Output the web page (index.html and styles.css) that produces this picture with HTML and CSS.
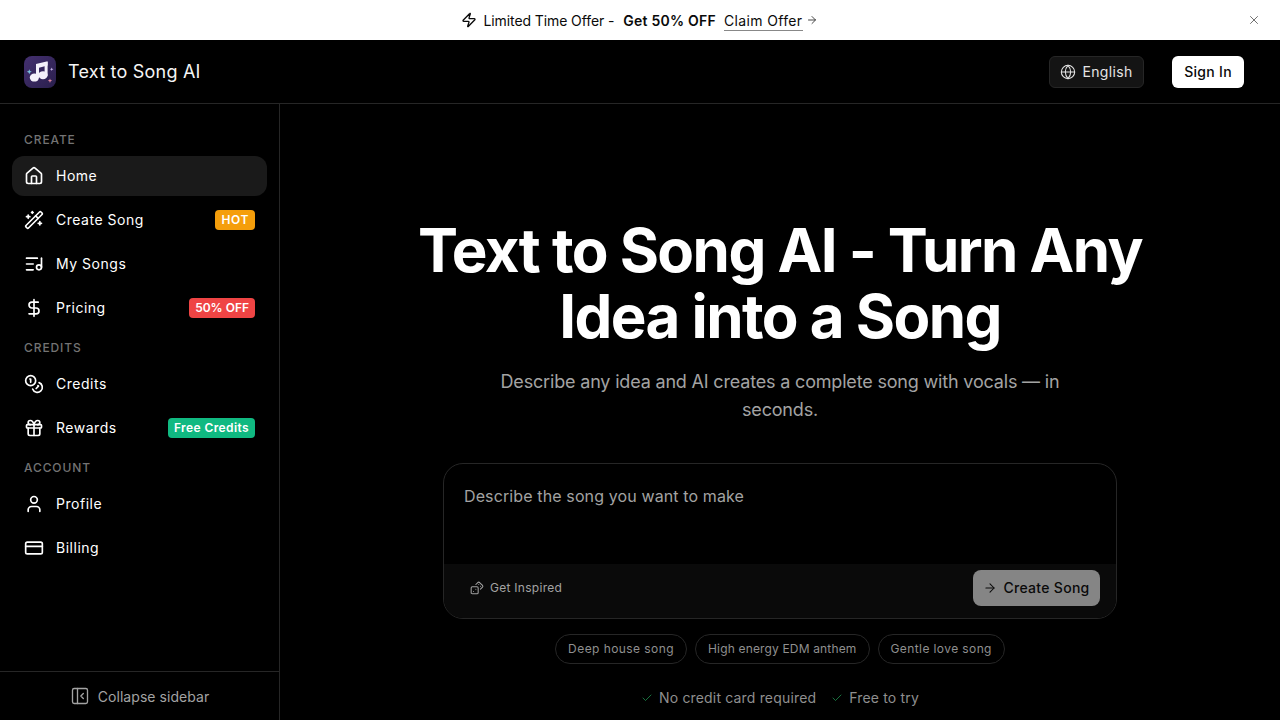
FILE: index.html
```html
<!DOCTYPE html>
<html lang="en">
<head>
  <meta charset="UTF-8">
  <title>Text to Song AI</title>
  <link rel="stylesheet" href="styles.css">
</head>
<body>
  <div class="promo">
    <svg class="ic promo-zap" viewBox="0 0 24 24"><path d="M4 14a1 1 0 0 1-.78-1.63l9.9-10.2a.5.5 0 0 1 .86.46l-1.92 6.02A1 1 0 0 0 13 10h7a1 1 0 0 1 .78 1.63l-9.9 10.2a.5.5 0 0 1-.86-.46l1.92-6.02A1 1 0 0 0 11 14z"/></svg>
    <span class="promo-text">Limited Time Offer -</span>
    <strong class="promo-deal">Get 50% OFF</strong>
    <a class="promo-link">Claim Offer</a>
    <svg class="ic promo-arrow" viewBox="0 0 24 24"><path d="M5 12h14"/><path d="m12 5 7 7-7 7"/></svg>
    <svg class="ic promo-close" viewBox="0 0 24 24"><path d="M18 6 6 18"/><path d="m6 6 12 12"/></svg>
  </div>

  <header class="topbar">
    <div class="brand">
      <svg class="logo" viewBox="0 0 32 32">
        <defs>
          <linearGradient id="logoBg" x1="0" y1="0" x2="1" y2="1">
            <stop offset="0" stop-color="#44306f"/>
            <stop offset="1" stop-color="#2a1f4d"/>
          </linearGradient>
        </defs>
        <rect width="32" height="32" rx="8" fill="url(#logoBg)"/>
        <path d="M12 8 23.6 5.2V9.6L15 11.8V21.5H12z" fill="#f4f0fa"/>
        <rect x="20.6" y="6" width="3" height="13.5" fill="#f4f0fa"/>
        <ellipse cx="10.4" cy="21.6" rx="4.6" ry="4" fill="#f4f0fa"/>
        <ellipse cx="19" cy="19.2" rx="4.6" ry="4" fill="#f4f0fa"/>
        <path d="M5.3 13.2l.7 1.8 1.8.7-1.8.7-.7 1.8-.7-1.8-1.8-.7 1.8-.7z" fill="#7cc4e0"/>
        <path d="M27.7 11.5l.5 1.3 1.3.5-1.3.5-.5 1.3-.5-1.3-1.3-.5 1.3-.5z" fill="#c9b8ee"/>
        <path d="M26 22.5l.6 1.6 1.6.6-1.6.6-.6 1.6-.6-1.6-1.6-.6 1.6-.6z" fill="#e58aa0"/>
      </svg>
      <span class="brand-name">Text to Song AI</span>
    </div>
    <div class="topbar-actions">
      <button class="lang-btn">
        <svg class="ic" viewBox="0 0 24 24"><circle cx="12" cy="12" r="10"/><path d="M12 2a14.5 14.5 0 0 0 0 20 14.5 14.5 0 0 0 0-20"/><path d="M2 12h20"/></svg>
        <span>English</span>
      </button>
      <button class="signin-btn"><span>Sign In</span></button>
    </div>
  </header>

  <div class="layout">
    <aside class="sidebar">
      <nav class="side-nav">
        <div class="nav-label">CREATE</div>
        <a class="nav-item active">
          <svg class="ic" viewBox="0 0 24 24"><path d="M15 21v-8a1 1 0 0 0-1-1h-4a1 1 0 0 0-1 1v8"/><path d="M3 10a2 2 0 0 1 .709-1.528l7-5.999a2 2 0 0 1 2.582 0l7 5.999A2 2 0 0 1 21 10v9a2 2 0 0 1-2 2H5a2 2 0 0 1-2-2z"/></svg>
          <span>Home</span>
        </a>
        <a class="nav-item">
          <svg class="ic" viewBox="0 0 24 24"><path d="m21.64 3.64-1.28-1.28a1.21 1.21 0 0 0-1.72 0L2.36 18.64a1.21 1.21 0 0 0 0 1.72l1.28 1.28a1.2 1.2 0 0 0 1.72 0L21.64 5.36a1.2 1.2 0 0 0 0-1.72"/><path d="m14 7 3 3"/><path d="M5 6v4"/><path d="M19 14v4"/><path d="M10 2v2"/><path d="M7 8H3"/><path d="M21 16h-4"/><path d="M11 3H9"/></svg>
          <span>Create Song</span>
          <em class="badge badge-hot">HOT</em>
        </a>
        <a class="nav-item">
          <svg class="ic" viewBox="0 0 24 24"><path d="M16 5H3"/><path d="M11 12H3"/><path d="M11 19H3"/><path d="M21 16V5"/><circle cx="18" cy="16" r="3"/></svg>
          <span>My Songs</span>
        </a>
        <a class="nav-item">
          <svg class="ic" viewBox="0 0 24 24"><line x1="12" x2="12" y1="2" y2="22"/><path d="M17 5H9.5a3.5 3.5 0 0 0 0 7h5a3.5 3.5 0 0 1 0 7H6"/></svg>
          <span>Pricing</span>
          <em class="badge badge-sale">50% OFF</em>
        </a>

        <div class="nav-label">CREDITS</div>
        <a class="nav-item">
          <svg class="ic" viewBox="0 0 24 24"><circle cx="8" cy="8" r="6"/><path d="M18.09 10.37A6 6 0 1 1 10.34 18"/><path d="M7 6h1v4"/><path d="m16.71 13.88.7.71-2.82 2.82"/></svg>
          <span>Credits</span>
        </a>
        <a class="nav-item">
          <svg class="ic" viewBox="0 0 24 24"><rect x="3" y="8" width="18" height="4" rx="1"/><path d="M12 8v13"/><path d="M19 12v7a2 2 0 0 1-2 2H7a2 2 0 0 1-2-2v-7"/><path d="M7.5 8a2.5 2.5 0 0 1 0-5A4.8 8 0 0 1 12 8a4.8 8 0 0 1 4.5-5 2.5 2.5 0 0 1 0 5"/></svg>
          <span>Rewards</span>
          <em class="badge badge-free">Free Credits</em>
        </a>

        <div class="nav-label">ACCOUNT</div>
        <a class="nav-item">
          <svg class="ic" viewBox="0 0 24 24"><path d="M19 21v-2a4 4 0 0 0-4-4H9a4 4 0 0 0-4 4v2"/><circle cx="12" cy="7" r="4"/></svg>
          <span>Profile</span>
        </a>
        <a class="nav-item">
          <svg class="ic" viewBox="0 0 24 24"><rect width="20" height="14" x="2" y="5" rx="2"/><line x1="2" x2="22" y1="10" y2="10"/></svg>
          <span>Billing</span>
        </a>
      </nav>
      <div class="collapse-row">
        <svg class="ic" viewBox="0 0 24 24"><rect width="18" height="18" x="3" y="3" rx="2"/><path d="M9 3v18"/><path d="m16 15-3-3 3-3"/></svg>
        <span>Collapse sidebar</span>
      </div>
    </aside>

    <main class="main">
      <h1 class="hero-title">Text to Song AI - Turn Any Idea into a Song</h1>
      <p class="hero-sub">Describe any idea and AI creates a complete song with vocals — in seconds.</p>

      <div class="prompt-card">
        <div class="prompt-input">Describe the song you want to make</div>
        <div class="prompt-foot">
          <span class="inspire">
            <svg class="ic" viewBox="0 0 24 24"><rect width="12" height="12" x="2" y="10" rx="2" ry="2"/><path d="m17.92 14 3.5-3.5a2.24 2.24 0 0 0 0-3l-5-4.92a2.24 2.24 0 0 0-3 0L10 6"/><path d="M6 18h.01"/><path d="M10 14h.01"/><path d="M15 6h.01"/><path d="M18 9h.01"/></svg>
            <span>Get Inspired</span>
          </span>
          <button class="create-btn">
            <svg class="ic" viewBox="0 0 24 24"><path d="M5 12h14"/><path d="m12 5 7 7-7 7"/></svg>
            <span>Create Song</span>
          </button>
        </div>
      </div>

      <div class="chips">
        <span class="chip chip-deep">Deep house song</span>
        <span class="chip chip-edm">High energy EDM anthem</span>
        <span class="chip chip-love">Gentle love song</span>
      </div>

      <div class="perks">
        <span class="perk"><svg class="ic" viewBox="0 0 24 24"><path d="M20 6 9 17l-5-5"/></svg>No credit card required</span>
        <span class="perk"><svg class="ic" viewBox="0 0 24 24"><path d="M20 6 9 17l-5-5"/></svg>Free to try</span>
      </div>
    </main>
  </div>
</body>
</html>
```

FILE: styles.css
```css
* { box-sizing: border-box; }
html, body { height: 100%; }
body { margin: 0; height: 720px; overflow: hidden; background: #000; color: #fff;
       font-family: Inter, "Liberation Sans", sans-serif; display: flex; flex-direction: column; }
button { font-family: inherit; cursor: pointer; }

.ic { width: 20px; height: 20px; flex: none; fill: none; stroke: currentColor; stroke-width: 2;
      stroke-linecap: round; stroke-linejoin: round; }

/* promo strip */
.promo { height: 40px; flex: none; background: #fff; color: #0a0a0a; display: flex; align-items: center;
         justify-content: center; font-size: 14px; position: relative; }
.promo-zap { width: 16px; height: 16px; margin-right: 7px; }
.promo-text { margin-right: 9px; letter-spacing: -.1px; padding-top: 1px; }
.promo-deal { font-weight: 600; margin-right: 8px; letter-spacing: .24px; padding-top: 1px; }
.promo-link { border-bottom: 1px solid #888; line-height: 18px; padding-top: 3px; letter-spacing: .35px; }
.promo-arrow { width: 12px; height: 12px; margin: 0 2px 0 3px; color: #333; stroke-width: 1.8; }
.promo-close { position: absolute; right: 19px; top: 13px; width: 14px; height: 14px; color: #666; stroke-width: 1.6; }

/* top bar */
.topbar { height: 64px; flex: none; display: flex; align-items: center; justify-content: space-between;
          padding: 1px 36px 0 24px; border-bottom: 1px solid #262626; }
.brand { display: flex; align-items: center; gap: 12px; }
.logo { width: 32px; height: 32px; }
.brand-name { font-size: 18px; font-weight: 400; letter-spacing: .22px; color: #f5f5f5; padding-bottom: 1px; }
.topbar-actions { display: flex; align-items: center; gap: 28px; }
.lang-btn { height: 32px; width: 95px; display: flex; align-items: center; justify-content: center; gap: 6px;
            background: #141414; border: 1px solid #262626; border-radius: 6px; color: #e5e5e5;
            font-size: 14px; font-weight: 400; letter-spacing: .35px; padding: 0; }
.lang-btn .ic { width: 16px; height: 16px; stroke-width: 1.6; }
.signin-btn { height: 32px; width: 72px; background: #fff; color: #0a0a0a; border: 0; border-radius: 6px;
              font-size: 14px; font-weight: 500; letter-spacing: .3px; padding: 0; }
.lang-btn span, .signin-btn span { display: block; padding-bottom: 1px; }

/* sidebar */
.layout { flex: 1; display: flex; min-height: 0; }
.sidebar { width: 280px; flex: none; border-right: 1px solid #262626; display: flex; flex-direction: column; }
.side-nav { flex: 1; padding: 24px 12px 0; }
.nav-label { height: 24px; line-height: 24px; padding-left: 12px; margin: 8px 0 4px; font-size: 12px;
             font-weight: 500; letter-spacing: .9px; color: #737373; }
.nav-label:first-child { margin-top: 0; }
.nav-item { height: 40px; display: flex; align-items: center; gap: 12px; padding: 0 12px; margin-bottom: 4px;
            border-radius: 12px; font-size: 14px; font-weight: 400; letter-spacing: .52px; color: #fff; }
.nav-item span { padding-bottom: 2px; }
.nav-item.active { background: #1a1a1a; }
.badge { margin-left: auto; height: 20px; line-height: 20px; padding: 0 6px; border-radius: 4px; color: #fff;
         font-size: 12px; font-weight: 600; font-style: normal; }
.badge-hot { background: #f59e0b; letter-spacing: .6px; }
.badge-sale { background: #ef4444; letter-spacing: 0; }
.badge-free { background: #10b981; letter-spacing: .4px; }
.collapse-row { height: 49px; flex: none; border-top: 1px solid #262626; display: flex; align-items: center;
                justify-content: center; gap: 8px; font-size: 14px; letter-spacing: .05px; color: #a3a3a3; }
.collapse-row .ic { stroke-width: 1.6; }

/* hero */
.main { flex: 1; min-width: 0; display: flex; flex-direction: column; align-items: center; padding-top: 113px; }
.hero-title { margin: 0; width: 800px; text-align: center; font-size: 60px; line-height: 66px; font-weight: 700;
              letter-spacing: -1.55px; }
.hero-sub { margin: 19px 0 0; width: 576px; text-align: center; font-size: 18px; line-height: 28px;
            letter-spacing: -.18px; color: #a3a3a3; }

.prompt-card { width: 674px; height: 156px; margin-top: 39px; flex: none; border: 1px solid #262626; border-radius: 20px;
               overflow: hidden; display: flex; flex-direction: column; }
.prompt-input { height: 100px; flex: none; padding: 20px 20px 0; font-size: 16px; line-height: 24px;
                letter-spacing: .12px; color: #a3a3a3; }
.prompt-foot { flex: 1; background: #0a0a0a; display: flex; align-items: center; justify-content: space-between;
               padding: 0 16px 6px 26px; }
.inspire { display: flex; align-items: center; gap: 6px; font-size: 12px; font-weight: 400; letter-spacing: .28px; color: #a3a3a3; }
.inspire .ic { width: 14px; height: 14px; stroke-width: 1.8; }
.inspire span { padding-bottom: 2px; }
.create-btn { width: 127px; height: 36px; display: flex; align-items: center; justify-content: center; gap: 6px; padding: 0;
              background: #858585; color: #0a0a0a; border: 0; border-radius: 8px; font-size: 14px; font-weight: 500;
              letter-spacing: .3px; }
.create-btn span { padding-bottom: 2px; }
.create-btn .ic { width: 14px; height: 14px; stroke-width: 1.8; }

.chips { display: flex; gap: 8px; margin-top: 15px; }
.chip { height: 30px; line-height: 28px; padding: 0 12px; border: 1px solid #262626; border-radius: 15px;
        font-size: 12px; color: #8f8f8f; }
.chip-deep { letter-spacing: .43px; }
.chip-edm { letter-spacing: .16px; }
.chip-love { letter-spacing: .4px; }

.perks { display: flex; gap: 15px; margin-top: 24px; font-size: 14px; line-height: 20px; letter-spacing: .17px; color: #8f8f8f; }
.perk { display: flex; align-items: center; gap: 6px; }
.perk .ic { width: 12px; height: 12px; color: #22a35a; stroke-width: 1.4; }
```
